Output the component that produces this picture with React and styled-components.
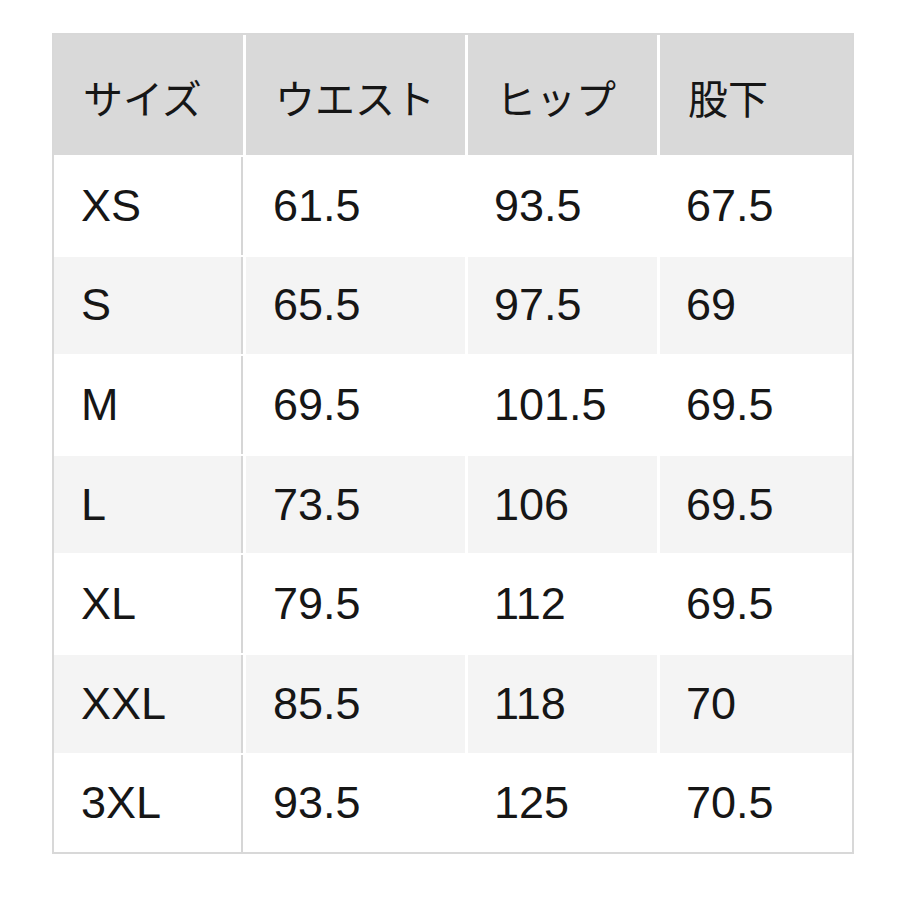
import React from 'react';
import styled, { createGlobalStyle } from 'styled-components';

const GlobalStyle = createGlobalStyle`
  body {
    margin: 0;
    background: #ffffff;
    font-family: "Liberation Sans", "Noto Sans CJK JP", sans-serif;
    color: #161616;
  }
`;

const Page = styled.div`
  padding: 33px 0 0 52px;
`;

const Table = styled.div`
  display: grid;
  grid-template-columns: 189px 219px 189px 192px;
  grid-template-rows: 120px;
  grid-auto-rows: 97.6px;
  column-gap: 3px;
  row-gap: 2px;
  width: 798px;
  border: 2px solid #d8d8d8;
  background: #ffffff;
`;

const HeadCell = styled.div`
  display: flex;
  align-items: center;
  padding: 4px 0 0 ${(p) => p.$pad}px;
  background: #d9d9d9;
  font-family: "Noto Sans CJK JP", "Liberation Sans", sans-serif;
  font-size: 40px;
  color: #161616;
`;

const Cell = styled.div`
  display: flex;
  align-items: center;
  padding-left: ${(p) => p.$pad}px;
  background: ${(p) => (p.$shade ? '#f4f4f4' : '#ffffff')};
  border-right: ${(p) => (p.$first ? '2px solid #d6d6d6' : 'none')};
  font-size: 45px;
`;

const headers = ['サイズ', 'ウエスト', 'ヒップ', '股下'];
const pads = [27, 27, 26, 26];

const rows = [
  ['XS', '61.5', '93.5', '67.5'],
  ['S', '65.5', '97.5', '69'],
  ['M', '69.5', '101.5', '69.5'],
  ['L', '73.5', '106', '69.5'],
  ['XL', '79.5', '112', '69.5'],
  ['XXL', '85.5', '118', '70'],
  ['3XL', '93.5', '125', '70.5'],
];

export default function App() {
  return (
    <>
      <GlobalStyle />
      <Page>
        <Table>
          {headers.map((h, i) => (
            <HeadCell key={h} $pad={pads[i] + 2}>
              {h}
            </HeadCell>
          ))}
          {rows.map((row, r) =>
            row.map((v, c) => (
              <Cell
                key={r + '-' + c}
                $pad={pads[c]}
                $shade={r % 2 === 1}
                $first={c === 0}
              >
                {v}
              </Cell>
            ))
          )}
        </Table>
      </Page>
    </>
  );
}
